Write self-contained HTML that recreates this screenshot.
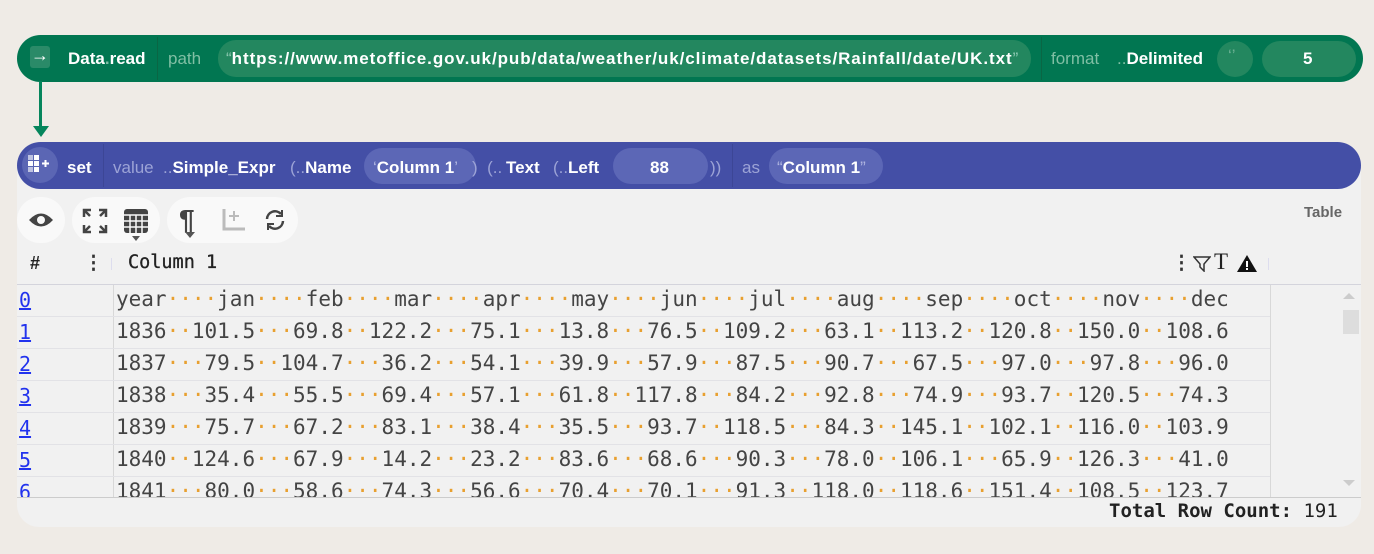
<!DOCTYPE html>
<html><head><meta charset="utf-8"><style>
*{margin:0;padding:0;box-sizing:border-box}
body{width:1374px;height:554px;background:#efebe6;position:relative;overflow:hidden;font-family:"Liberation Sans",sans-serif}
.a{position:absolute;white-space:nowrap}
.bar{position:absolute;border-radius:24px}
.pill{position:absolute;border-radius:18px}
.w{color:#fff;font-weight:bold;font-size:17px}
.l{font-size:17px}
.mono{font-family:"DejaVu Sans Mono",monospace;font-size:21px;color:#444}
.d{color:#e8a030}
.row{position:absolute;left:17px;width:1253px;height:32px;border-bottom:1px solid #e2e2e6}
.n{position:absolute;left:2px;top:3px;font-family:"DejaVu Sans Mono",monospace;font-size:20px;color:#2233ee;text-decoration:underline}
.t{position:absolute;left:99px;top:2px}
.grp{position:absolute;top:197px;height:46px;background:#f9f9f9;border-radius:23px}
</style></head><body>
<!-- green bar -->
<div class="bar" style="left:17px;top:35px;width:1346px;height:47px;background:#017651"></div>
<div class="a" style="left:30px;top:46px;width:20px;height:22px;background:#2a8a68;border-radius:3px"></div>
<div class="a w" style="left:31px;top:45px;font-size:18px">→</div>
<div class="a w" style="left:68px;top:49px">Data<span style="color:#7dbfa6">.</span>read</div>
<div class="a" style="left:157px;top:37px;width:1px;height:43px;background:#0a6644"></div>
<div class="a l" style="left:168px;top:49px;color:#80bfa4">path</div>
<div class="pill" style="left:218px;top:40px;width:813px;height:37px;background:#23875f"></div>
<div class="a w" style="left:226px;top:49px"><span style="color:#8cc8b0;font-weight:normal">“</span><span style="letter-spacing:0.93px">https://www.metoffice.gov.uk/pub/data/weather/uk/climate/datasets/Rainfall/date/UK.txt</span><span style="color:#8cc8b0;font-weight:normal">”</span></div>
<div class="a" style="left:1041px;top:37px;width:1px;height:43px;background:#0a6644"></div>
<div class="a l" style="left:1051px;top:49px;color:#80bfa4">format</div>
<div class="a w" style="left:1117px;top:49px"><span style="color:#80bfa4;font-weight:normal">..</span>Delimited</div>
<div class="pill" style="left:1217px;top:41px;width:36px;height:36px;background:#23875f"></div>
<div class="a l" style="left:1228px;top:46px;color:#6aaf92">‘’</div>
<div class="pill" style="left:1262px;top:41px;width:94px;height:36px;background:#23875f"></div>
<div class="a w" style="left:1303px;top:49px">5</div>
<!-- arrow -->
<div class="a" style="left:39px;top:81px;width:3px;height:47px;background:#05855c"></div>
<div class="a" style="left:33px;top:126px;width:0;height:0;border-left:8px solid transparent;border-right:8px solid transparent;border-top:11px solid #05855c"></div>
<!-- panel -->
<div class="a" style="left:17px;top:165px;width:1344px;height:362px;background:#f1f1f1;border-radius:0 0 22px 22px"></div>
<!-- blue bar -->
<div class="bar" style="left:17px;top:142px;width:1344px;height:47px;background:#444fa6"></div>
<div class="a" style="left:22px;top:147px;width:36px;height:36px;border-radius:18px;background:#5b66b4"></div>
<svg class="a" style="left:28px;top:155px" width="26" height="20"><g fill="#fff"><rect x="0" y="0" width="5" height="5" opacity=".6"/><rect x="6" y="0" width="5" height="5"/><rect x="0" y="6" width="5" height="5"/><rect x="6" y="6" width="5" height="5"/><rect x="0" y="12" width="5" height="5" opacity=".6"/><rect x="6" y="12" width="5" height="5"/><rect x="14" y="7.5" width="7" height="2"/><rect x="16.5" y="5" width="2" height="7"/></g></svg>
<div class="a w" style="left:67px;top:158px">set</div>
<div class="a" style="left:103px;top:144px;width:1px;height:43px;background:#3c4696"></div>
<div class="a l" style="left:113px;top:158px;color:#9ca3d6">value</div>
<div class="a w" style="left:163px;top:158px"><span style="color:#9ca3d6;font-weight:normal">..</span>Simple_Expr</div>
<div class="a w" style="left:290px;top:158px"><span style="color:#9ca3d6;font-weight:normal">(..</span>Name</div>
<div class="pill" style="left:364px;top:148px;width:112px;height:36px;background:#5c67b6"></div>
<div class="a w" style="left:373px;top:158px"><span style="color:#b0b6e0;font-weight:normal">‘</span>Column 1<span style="color:#b0b6e0;font-weight:normal">’</span></div>
<div class="a l" style="left:472px;top:158px;color:#9ca3d6">)&nbsp;&nbsp;(..</div>
<div class="a w" style="left:506px;top:158px">Text</div>
<div class="a l" style="left:553px;top:158px;color:#9ca3d6">(..</div>
<div class="a w" style="left:568px;top:158px">Left</div>
<div class="pill" style="left:613px;top:148px;width:95px;height:36px;background:#5c67b6"></div>
<div class="a w" style="left:650px;top:158px">88</div>
<div class="a l" style="left:710px;top:158px;color:#9ca3d6">))</div>
<div class="a" style="left:732px;top:144px;width:1px;height:43px;background:#3c4696"></div>
<div class="a l" style="left:742px;top:158px;color:#9ca3d6">as</div>
<div class="pill" style="left:769px;top:148px;width:114px;height:36px;background:#5c67b6"></div>
<div class="a w" style="left:777px;top:158px"><span style="color:#b0b6e0;font-weight:normal">“</span>Column 1<span style="color:#b0b6e0;font-weight:normal">”</span></div>
<!-- toolbar -->
<div class="grp" style="left:17px;width:48px"></div>
<div class="grp" style="left:72px;width:88px"></div>
<div class="grp" style="left:167px;width:131px"></div>
<svg class="a" style="left:28px;top:210px" width="26" height="20"><path d="M1 10Q13 -3 25 10Q13 23 1 10Z" fill="#444"/><circle cx="13" cy="10" r="4" fill="#f9f9f9"/></svg>
<svg class="a" style="left:82px;top:208px" width="26" height="26" stroke="#444" stroke-width="2.5" fill="none"><path d="M2 9V2H9M2 2L8 8M17 2H24V9M24 2L18 8M2 17V24H9M2 24L8 18M24 17V24H17M24 24L18 18"/></svg>
<svg class="a" style="left:123px;top:208px" width="28" height="34"><rect x="1" y="1" width="24" height="24" rx="3" fill="#444"/><g stroke="#f9f9f9" stroke-width="1.5"><path d="M1 7H25M1 13H25M1 19H25M7 7V25M13 7V25M19 7V25"/></g><path d="M9 28L13 33L17 28Z" fill="#555"/></svg>
<div class="a" style="left:179px;top:204px;font-size:28px;font-weight:bold;color:#444">¶</div>
<svg class="a" style="left:185px;top:232px" width="10" height="8"><path d="M0 0L5 6L10 0Z" fill="#555"/></svg>
<svg class="a" style="left:220px;top:207px" width="26" height="26"><path d="M4 2V22H25" stroke="#bbb" stroke-width="3" fill="none"/><path d="M14 4V14M9 9H19" stroke="#bbb" stroke-width="2"/></svg>
<svg class="a" style="left:264px;top:209px" width="22" height="22" fill="none" stroke="#444" stroke-width="2.5"><path d="M3 10A8 8 0 0 1 17 5M19 12A8 8 0 0 1 5 17"/><path d="M18 1V7H12M4 21V15H10" stroke-width="2"/></svg>
<div class="a" style="left:1304px;top:204px;font-size:15px;font-weight:bold;color:#666">Table</div>
<!-- header -->
<div class="a" style="left:30px;top:253px;font-size:18px;font-weight:bold;color:#222">#</div>
<div class="a" style="left:84px;top:252px;font-size:19px;font-weight:bold;color:#333">⋮</div>
<div class="a" style="left:111px;top:258px;width:1px;height:12px;background:#dde"></div>
<div class="a" style="left:128px;top:252px;font-family:'DejaVu Sans Mono',monospace;font-size:18.5px;color:#222;-webkit-text-stroke:0.3px #222">Column 1</div>
<div class="a" style="left:1172px;top:252px;font-size:19px;font-weight:bold;color:#333">⋮</div>
<svg class="a" style="left:1193px;top:256px" width="18" height="16"><path d="M1 1H17L11 8V15L7 11V8Z" fill="none" stroke="#333" stroke-width="1.5"/></svg>
<div class="a" style="left:1214px;top:249px;font-family:'Liberation Serif',serif;font-size:23px;color:#222">T</div>
<svg class="a" style="left:1237px;top:255px" width="20" height="17"><path d="M10 0L20 17H0Z" fill="#111"/><rect x="9" y="6" width="2" height="6" fill="#fff"/><rect x="9" y="13" width="2" height="2" fill="#fff"/></svg>
<div class="a" style="left:1268px;top:258px;width:1px;height:12px;background:#dde"></div>
<div class="a" style="left:17px;top:284px;width:1344px;height:1px;background:#d4d4dc"></div>
<!-- rows -->
<div class="a" style="left:17px;top:285px;width:1344px;height:212px;overflow:hidden">
<div class="a" style="left:96px;top:0;width:1px;height:212px;background:#d8d8d8"></div>
<div class="a" style="left:1253px;top:0;width:1px;height:212px;background:#d8d8d8"></div>
<div class="row" style="left:0;top:0"><span class="n">0</span><span class="t mono">year<span class="d">····</span>jan<span class="d">····</span>feb<span class="d">····</span>mar<span class="d">····</span>apr<span class="d">····</span>may<span class="d">····</span>jun<span class="d">····</span>jul<span class="d">····</span>aug<span class="d">····</span>sep<span class="d">····</span>oct<span class="d">····</span>nov<span class="d">····</span>dec</span></div>
<div class="row" style="left:0;top:32px"><span class="n">1</span><span class="t mono">1836<span class="d">··</span>101.5<span class="d">···</span>69.8<span class="d">··</span>122.2<span class="d">···</span>75.1<span class="d">···</span>13.8<span class="d">···</span>76.5<span class="d">··</span>109.2<span class="d">···</span>63.1<span class="d">··</span>113.2<span class="d">··</span>120.8<span class="d">··</span>150.0<span class="d">··</span>108.6</span></div>
<div class="row" style="left:0;top:64px"><span class="n">2</span><span class="t mono">1837<span class="d">···</span>79.5<span class="d">··</span>104.7<span class="d">···</span>36.2<span class="d">···</span>54.1<span class="d">···</span>39.9<span class="d">···</span>57.9<span class="d">···</span>87.5<span class="d">···</span>90.7<span class="d">···</span>67.5<span class="d">···</span>97.0<span class="d">···</span>97.8<span class="d">···</span>96.0</span></div>
<div class="row" style="left:0;top:96px"><span class="n">3</span><span class="t mono">1838<span class="d">···</span>35.4<span class="d">···</span>55.5<span class="d">···</span>69.4<span class="d">···</span>57.1<span class="d">···</span>61.8<span class="d">··</span>117.8<span class="d">···</span>84.2<span class="d">···</span>92.8<span class="d">···</span>74.9<span class="d">···</span>93.7<span class="d">··</span>120.5<span class="d">···</span>74.3</span></div>
<div class="row" style="left:0;top:128px"><span class="n">4</span><span class="t mono">1839<span class="d">···</span>75.7<span class="d">···</span>67.2<span class="d">···</span>83.1<span class="d">···</span>38.4<span class="d">···</span>35.5<span class="d">···</span>93.7<span class="d">··</span>118.5<span class="d">···</span>84.3<span class="d">··</span>145.1<span class="d">··</span>102.1<span class="d">··</span>116.0<span class="d">··</span>103.9</span></div>
<div class="row" style="left:0;top:160px"><span class="n">5</span><span class="t mono">1840<span class="d">··</span>124.6<span class="d">···</span>67.9<span class="d">···</span>14.2<span class="d">···</span>23.2<span class="d">···</span>83.6<span class="d">···</span>68.6<span class="d">···</span>90.3<span class="d">···</span>78.0<span class="d">··</span>106.1<span class="d">···</span>65.9<span class="d">··</span>126.3<span class="d">···</span>41.0</span></div>
<div class="row" style="left:0;top:192px"><span class="n">6</span><span class="t mono">1841<span class="d">···</span>80.0<span class="d">···</span>58.6<span class="d">···</span>74.3<span class="d">···</span>56.6<span class="d">···</span>70.4<span class="d">···</span>70.1<span class="d">···</span>91.3<span class="d">··</span>118.0<span class="d">··</span>118.6<span class="d">··</span>151.4<span class="d">··</span>108.5<span class="d">··</span>123.7</span></div>
<div class="a" style="left:1326px;top:8px;width:0;height:0;border-left:6px solid transparent;border-right:6px solid transparent;border-bottom:6px solid #ccc"></div>
<div class="a" style="left:1326px;top:25px;width:16px;height:24px;background:#ddd"></div>
<div class="a" style="left:1326px;top:195px;width:0;height:0;border-left:6px solid transparent;border-right:6px solid transparent;border-top:6px solid #ccc"></div>
</div>
<div class="a" style="left:17px;top:497px;width:1344px;height:1px;background:#ccc"></div>
<div class="a" style="left:1109px;top:500px;font-family:'DejaVu Sans Mono',monospace;font-size:19px;color:#222"><b>Total Row Count:</b> 191</div>
</body></html>
